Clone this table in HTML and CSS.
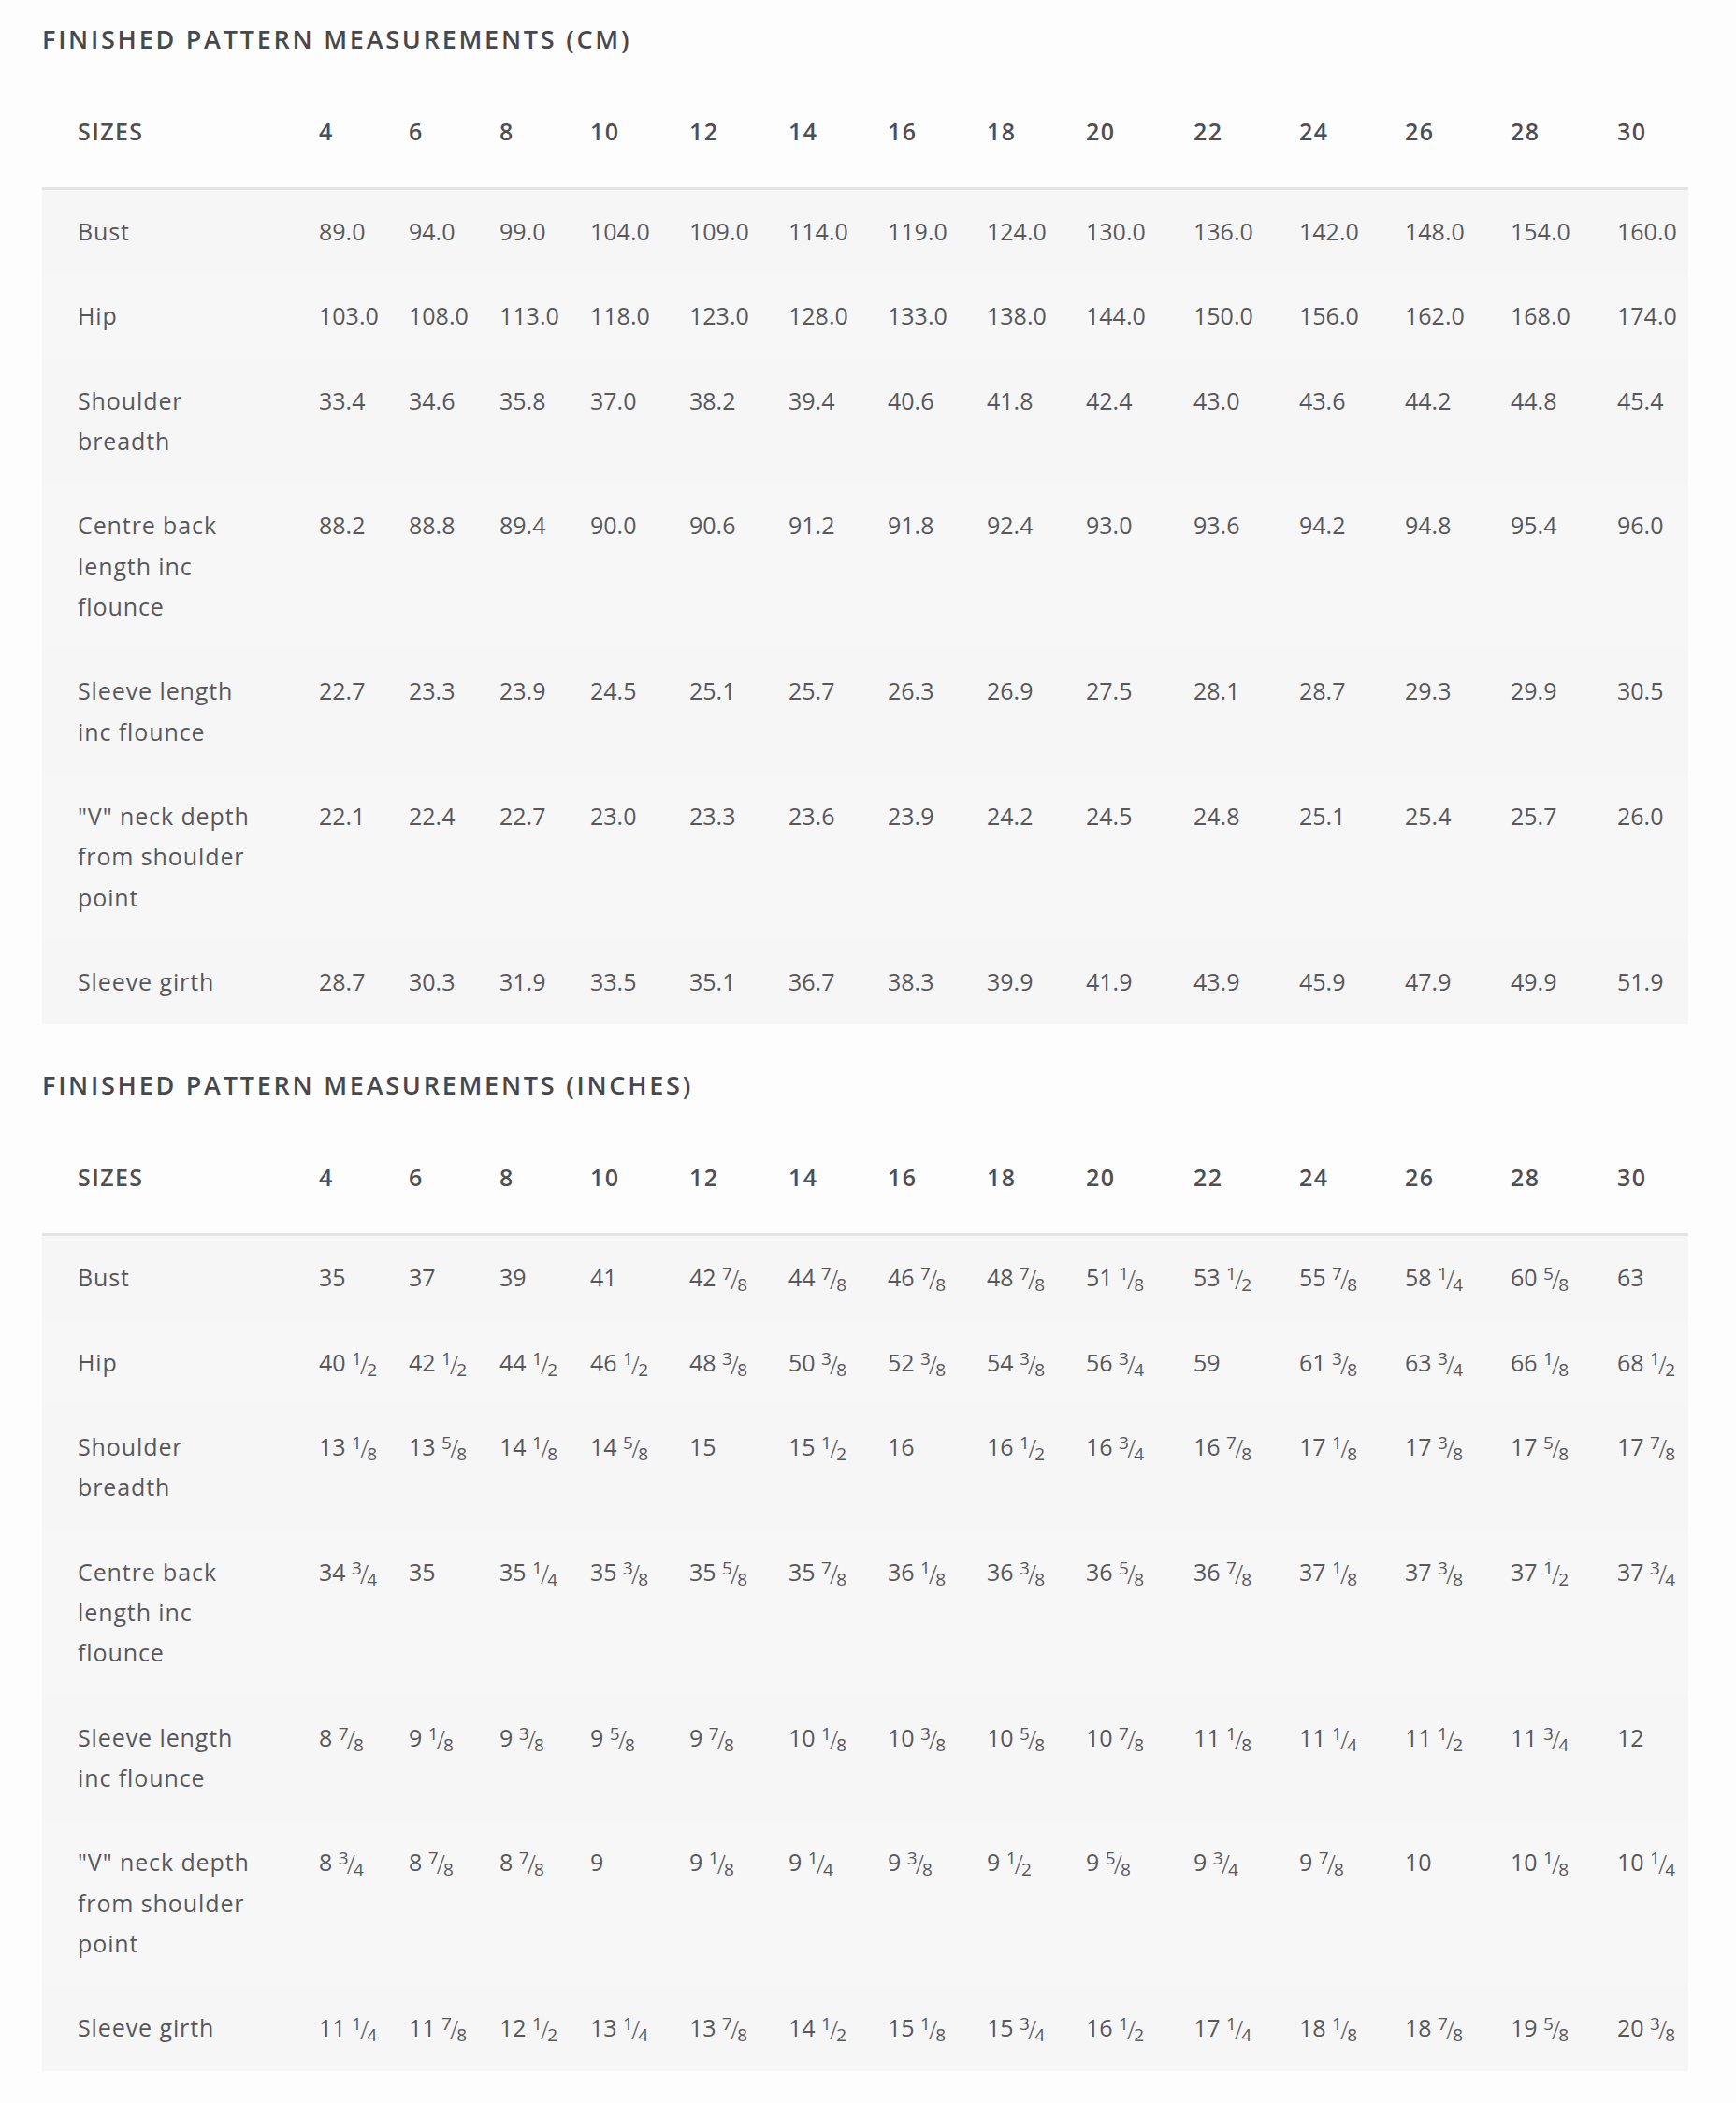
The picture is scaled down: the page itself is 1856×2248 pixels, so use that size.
FILE: index.html
```html
<!DOCTYPE html>
<html lang="en">
<head>
<meta charset="utf-8">
<title>Finished pattern measurements</title>
<link rel="stylesheet" href="styles.css">
</head>
<body>
<main class="page">
  <section class="chart">
    <h2 class="chart-title">FINISHED PATTERN MEASUREMENTS (CM)</h2>
    <table class="size-table">
      <colgroup>
        <col class="c-label"><col class="c-a"><col class="c-b"><col class="c-b"><col class="c-c"><col class="c-c"><col class="c-c"><col class="c-c"><col class="c-c"><col class="c-d"><col class="c-e"><col class="c-e"><col class="c-e"><col class="c-f"><col class="c-last">
      </colgroup>
      <thead>
        <tr><th>SIZES</th><th>4</th><th>6</th><th>8</th><th>10</th><th>12</th><th>14</th><th>16</th><th>18</th><th>20</th><th>22</th><th>24</th><th>26</th><th>28</th><th>30</th></tr>
      </thead>
      <tbody>
        <tr><td>Bust</td><td>89.0</td><td>94.0</td><td>99.0</td><td>104.0</td><td>109.0</td><td>114.0</td><td>119.0</td><td>124.0</td><td>130.0</td><td>136.0</td><td>142.0</td><td>148.0</td><td>154.0</td><td>160.0</td></tr>
        <tr><td>Hip</td><td>103.0</td><td>108.0</td><td>113.0</td><td>118.0</td><td>123.0</td><td>128.0</td><td>133.0</td><td>138.0</td><td>144.0</td><td>150.0</td><td>156.0</td><td>162.0</td><td>168.0</td><td>174.0</td></tr>
        <tr><td>Shoulder breadth</td><td>33.4</td><td>34.6</td><td>35.8</td><td>37.0</td><td>38.2</td><td>39.4</td><td>40.6</td><td>41.8</td><td>42.4</td><td>43.0</td><td>43.6</td><td>44.2</td><td>44.8</td><td>45.4</td></tr>
        <tr><td>Centre back length inc flounce</td><td>88.2</td><td>88.8</td><td>89.4</td><td>90.0</td><td>90.6</td><td>91.2</td><td>91.8</td><td>92.4</td><td>93.0</td><td>93.6</td><td>94.2</td><td>94.8</td><td>95.4</td><td>96.0</td></tr>
        <tr><td>Sleeve length inc flounce</td><td>22.7</td><td>23.3</td><td>23.9</td><td>24.5</td><td>25.1</td><td>25.7</td><td>26.3</td><td>26.9</td><td>27.5</td><td>28.1</td><td>28.7</td><td>29.3</td><td>29.9</td><td>30.5</td></tr>
        <tr><td>"V" neck depth from shoulder point</td><td>22.1</td><td>22.4</td><td>22.7</td><td>23.0</td><td>23.3</td><td>23.6</td><td>23.9</td><td>24.2</td><td>24.5</td><td>24.8</td><td>25.1</td><td>25.4</td><td>25.7</td><td>26.0</td></tr>
        <tr><td>Sleeve girth</td><td>28.7</td><td>30.3</td><td>31.9</td><td>33.5</td><td>35.1</td><td>36.7</td><td>38.3</td><td>39.9</td><td>41.9</td><td>43.9</td><td>45.9</td><td>47.9</td><td>49.9</td><td>51.9</td></tr>
      </tbody>
    </table>
  </section>

  <section class="chart">
    <h2 class="chart-title">FINISHED PATTERN MEASUREMENTS (INCHES)</h2>
    <table class="size-table">
      <colgroup>
        <col class="c-label"><col class="c-a"><col class="c-b"><col class="c-b"><col class="c-c"><col class="c-c"><col class="c-c"><col class="c-c"><col class="c-c"><col class="c-d"><col class="c-e"><col class="c-e"><col class="c-e"><col class="c-f"><col class="c-last">
      </colgroup>
      <thead>
        <tr><th>SIZES</th><th>4</th><th>6</th><th>8</th><th>10</th><th>12</th><th>14</th><th>16</th><th>18</th><th>20</th><th>22</th><th>24</th><th>26</th><th>28</th><th>30</th></tr>
      </thead>
      <tbody>
        <tr><td>Bust</td><td>35</td><td>37</td><td>39</td><td>41</td>
          <td>42 <span class="fr"><sup>7</sup><span class="sl">/</span><sub>8</sub></span></td>
          <td>44 <span class="fr"><sup>7</sup><span class="sl">/</span><sub>8</sub></span></td>
          <td>46 <span class="fr"><sup>7</sup><span class="sl">/</span><sub>8</sub></span></td>
          <td>48 <span class="fr"><sup>7</sup><span class="sl">/</span><sub>8</sub></span></td>
          <td>51 <span class="fr"><sup>1</sup><span class="sl">/</span><sub>8</sub></span></td>
          <td>53 <span class="fr"><sup>1</sup><span class="sl">/</span><sub>2</sub></span></td>
          <td>55 <span class="fr"><sup>7</sup><span class="sl">/</span><sub>8</sub></span></td>
          <td>58 <span class="fr"><sup>1</sup><span class="sl">/</span><sub>4</sub></span></td>
          <td>60 <span class="fr"><sup>5</sup><span class="sl">/</span><sub>8</sub></span></td>
          <td>63</td></tr>
        <tr><td>Hip</td>
          <td>40 <span class="fr"><sup>1</sup><span class="sl">/</span><sub>2</sub></span></td>
          <td>42 <span class="fr"><sup>1</sup><span class="sl">/</span><sub>2</sub></span></td>
          <td>44 <span class="fr"><sup>1</sup><span class="sl">/</span><sub>2</sub></span></td>
          <td>46 <span class="fr"><sup>1</sup><span class="sl">/</span><sub>2</sub></span></td>
          <td>48 <span class="fr"><sup>3</sup><span class="sl">/</span><sub>8</sub></span></td>
          <td>50 <span class="fr"><sup>3</sup><span class="sl">/</span><sub>8</sub></span></td>
          <td>52 <span class="fr"><sup>3</sup><span class="sl">/</span><sub>8</sub></span></td>
          <td>54 <span class="fr"><sup>3</sup><span class="sl">/</span><sub>8</sub></span></td>
          <td>56 <span class="fr"><sup>3</sup><span class="sl">/</span><sub>4</sub></span></td>
          <td>59</td>
          <td>61 <span class="fr"><sup>3</sup><span class="sl">/</span><sub>8</sub></span></td>
          <td>63 <span class="fr"><sup>3</sup><span class="sl">/</span><sub>4</sub></span></td>
          <td>66 <span class="fr"><sup>1</sup><span class="sl">/</span><sub>8</sub></span></td>
          <td>68 <span class="fr"><sup>1</sup><span class="sl">/</span><sub>2</sub></span></td></tr>
        <tr><td>Shoulder breadth</td>
          <td>13 <span class="fr"><sup>1</sup><span class="sl">/</span><sub>8</sub></span></td>
          <td>13 <span class="fr"><sup>5</sup><span class="sl">/</span><sub>8</sub></span></td>
          <td>14 <span class="fr"><sup>1</sup><span class="sl">/</span><sub>8</sub></span></td>
          <td>14 <span class="fr"><sup>5</sup><span class="sl">/</span><sub>8</sub></span></td>
          <td>15</td>
          <td>15 <span class="fr"><sup>1</sup><span class="sl">/</span><sub>2</sub></span></td>
          <td>16</td>
          <td>16 <span class="fr"><sup>1</sup><span class="sl">/</span><sub>2</sub></span></td>
          <td>16 <span class="fr"><sup>3</sup><span class="sl">/</span><sub>4</sub></span></td>
          <td>16 <span class="fr"><sup>7</sup><span class="sl">/</span><sub>8</sub></span></td>
          <td>17 <span class="fr"><sup>1</sup><span class="sl">/</span><sub>8</sub></span></td>
          <td>17 <span class="fr"><sup>3</sup><span class="sl">/</span><sub>8</sub></span></td>
          <td>17 <span class="fr"><sup>5</sup><span class="sl">/</span><sub>8</sub></span></td>
          <td>17 <span class="fr"><sup>7</sup><span class="sl">/</span><sub>8</sub></span></td></tr>
        <tr><td>Centre back length inc flounce</td>
          <td>34 <span class="fr"><sup>3</sup><span class="sl">/</span><sub>4</sub></span></td>
          <td>35</td>
          <td>35 <span class="fr"><sup>1</sup><span class="sl">/</span><sub>4</sub></span></td>
          <td>35 <span class="fr"><sup>3</sup><span class="sl">/</span><sub>8</sub></span></td>
          <td>35 <span class="fr"><sup>5</sup><span class="sl">/</span><sub>8</sub></span></td>
          <td>35 <span class="fr"><sup>7</sup><span class="sl">/</span><sub>8</sub></span></td>
          <td>36 <span class="fr"><sup>1</sup><span class="sl">/</span><sub>8</sub></span></td>
          <td>36 <span class="fr"><sup>3</sup><span class="sl">/</span><sub>8</sub></span></td>
          <td>36 <span class="fr"><sup>5</sup><span class="sl">/</span><sub>8</sub></span></td>
          <td>36 <span class="fr"><sup>7</sup><span class="sl">/</span><sub>8</sub></span></td>
          <td>37 <span class="fr"><sup>1</sup><span class="sl">/</span><sub>8</sub></span></td>
          <td>37 <span class="fr"><sup>3</sup><span class="sl">/</span><sub>8</sub></span></td>
          <td>37 <span class="fr"><sup>1</sup><span class="sl">/</span><sub>2</sub></span></td>
          <td>37 <span class="fr"><sup>3</sup><span class="sl">/</span><sub>4</sub></span></td></tr>
        <tr><td>Sleeve length inc flounce</td>
          <td>8 <span class="fr"><sup>7</sup><span class="sl">/</span><sub>8</sub></span></td>
          <td>9 <span class="fr"><sup>1</sup><span class="sl">/</span><sub>8</sub></span></td>
          <td>9 <span class="fr"><sup>3</sup><span class="sl">/</span><sub>8</sub></span></td>
          <td>9 <span class="fr"><sup>5</sup><span class="sl">/</span><sub>8</sub></span></td>
          <td>9 <span class="fr"><sup>7</sup><span class="sl">/</span><sub>8</sub></span></td>
          <td>10 <span class="fr"><sup>1</sup><span class="sl">/</span><sub>8</sub></span></td>
          <td>10 <span class="fr"><sup>3</sup><span class="sl">/</span><sub>8</sub></span></td>
          <td>10 <span class="fr"><sup>5</sup><span class="sl">/</span><sub>8</sub></span></td>
          <td>10 <span class="fr"><sup>7</sup><span class="sl">/</span><sub>8</sub></span></td>
          <td>11 <span class="fr"><sup>1</sup><span class="sl">/</span><sub>8</sub></span></td>
          <td>11 <span class="fr"><sup>1</sup><span class="sl">/</span><sub>4</sub></span></td>
          <td>11 <span class="fr"><sup>1</sup><span class="sl">/</span><sub>2</sub></span></td>
          <td>11 <span class="fr"><sup>3</sup><span class="sl">/</span><sub>4</sub></span></td>
          <td>12</td></tr>
        <tr><td>"V" neck depth from shoulder point</td>
          <td>8 <span class="fr"><sup>3</sup><span class="sl">/</span><sub>4</sub></span></td>
          <td>8 <span class="fr"><sup>7</sup><span class="sl">/</span><sub>8</sub></span></td>
          <td>8 <span class="fr"><sup>7</sup><span class="sl">/</span><sub>8</sub></span></td>
          <td>9</td>
          <td>9 <span class="fr"><sup>1</sup><span class="sl">/</span><sub>8</sub></span></td>
          <td>9 <span class="fr"><sup>1</sup><span class="sl">/</span><sub>4</sub></span></td>
          <td>9 <span class="fr"><sup>3</sup><span class="sl">/</span><sub>8</sub></span></td>
          <td>9 <span class="fr"><sup>1</sup><span class="sl">/</span><sub>2</sub></span></td>
          <td>9 <span class="fr"><sup>5</sup><span class="sl">/</span><sub>8</sub></span></td>
          <td>9 <span class="fr"><sup>3</sup><span class="sl">/</span><sub>4</sub></span></td>
          <td>9 <span class="fr"><sup>7</sup><span class="sl">/</span><sub>8</sub></span></td>
          <td>10</td>
          <td>10 <span class="fr"><sup>1</sup><span class="sl">/</span><sub>8</sub></span></td>
          <td>10 <span class="fr"><sup>1</sup><span class="sl">/</span><sub>4</sub></span></td></tr>
        <tr><td>Sleeve girth</td>
          <td>11 <span class="fr"><sup>1</sup><span class="sl">/</span><sub>4</sub></span></td>
          <td>11 <span class="fr"><sup>7</sup><span class="sl">/</span><sub>8</sub></span></td>
          <td>12 <span class="fr"><sup>1</sup><span class="sl">/</span><sub>2</sub></span></td>
          <td>13 <span class="fr"><sup>1</sup><span class="sl">/</span><sub>4</sub></span></td>
          <td>13 <span class="fr"><sup>7</sup><span class="sl">/</span><sub>8</sub></span></td>
          <td>14 <span class="fr"><sup>1</sup><span class="sl">/</span><sub>2</sub></span></td>
          <td>15 <span class="fr"><sup>1</sup><span class="sl">/</span><sub>8</sub></span></td>
          <td>15 <span class="fr"><sup>3</sup><span class="sl">/</span><sub>4</sub></span></td>
          <td>16 <span class="fr"><sup>1</sup><span class="sl">/</span><sub>2</sub></span></td>
          <td>17 <span class="fr"><sup>1</sup><span class="sl">/</span><sub>4</sub></span></td>
          <td>18 <span class="fr"><sup>1</sup><span class="sl">/</span><sub>8</sub></span></td>
          <td>18 <span class="fr"><sup>7</sup><span class="sl">/</span><sub>8</sub></span></td>
          <td>19 <span class="fr"><sup>5</sup><span class="sl">/</span><sub>8</sub></span></td>
          <td>20 <span class="fr"><sup>3</sup><span class="sl">/</span><sub>8</sub></span></td></tr>
      </tbody>
    </table>
  </section>
</main>
</body>
</html>
```

FILE: styles.css
```css
html, body {
  margin: 0;
  padding: 0;
  background: #fdfdfd;
}

body {
  font-family: "Open Sans", "Liberation Sans", sans-serif;
  color: #58585c;
}

.page {
  padding: 26px 51px 40px 45px;
}

.chart + .chart {
  margin-top: 49px;
}

.chart-title {
  margin: 0 0 31px;
  font-size: 27px;
  line-height: 32px;
  font-weight: 600;
  letter-spacing: 2.75px;
  color: #48484c;
}

.size-table {
  width: 1760px;
  table-layout: fixed;
  border-collapse: separate;
  border-spacing: 0;
}

.c-label { width: 296px; }
.c-a { width: 96px; }
.c-b { width: 97px; }
.c-c { width: 106px; }
.c-d { width: 115px; }
.c-e { width: 113px; }
.c-f { width: 114px; }
.c-last { width: 76px; }

.size-table th {
  text-align: left;
  font-size: 25px;
  line-height: 43px;
  font-weight: 600;
  letter-spacing: 1.4px;
  color: #4e4e53;
  padding: 30px 0 38px;
  border-bottom: 3px solid #e4e4e4;
}

.size-table td {
  text-align: left;
  vertical-align: top;
  font-size: 25px;
  line-height: 43.33px;
  letter-spacing: 0;
  padding: 23px 0 24px;
}

.size-table th:first-child,
.size-table td:first-child {
  padding-left: 38px;
  padding-right: 68px;
}

.size-table td:first-child {
  letter-spacing: 0.9px;
}

.size-table tbody tr {
  background: #f6f6f6;
}

.size-table tbody tr:nth-child(even) {
  background: #f7f7f7;
}

.fr {
  font-size: 19px;
  letter-spacing: 0;
  line-height: 0;
  white-space: nowrap;
}

.fr sup,
.fr sub {
  font-size: 1em;
  line-height: 0;
}

.fr sup {
  vertical-align: 7px;
}

.fr sub {
  vertical-align: -5px;
}

.fr .sl {
  font-size: 27px;
  font-weight: 300;
  vertical-align: -3px;
  margin: 0 -2px;
  line-height: 0;
}
```
